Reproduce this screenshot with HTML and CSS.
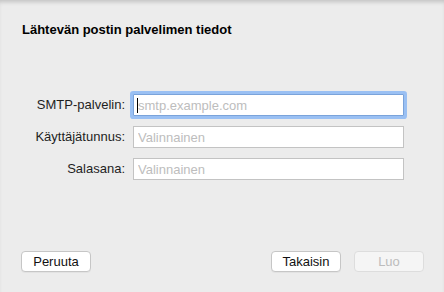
FILE: index.html
```html
<!DOCTYPE html>
<html lang="fi">
<head>
    <meta charset="UTF-8">
    <title>Lähtevän postin palvelimen tiedot</title>
    <link rel="stylesheet" href="styles.css">
</head>
<body>
    <div class="sheet">
        <h1 class="sheet-title">Lähtevän postin palvelimen tiedot</h1>

        <form class="server-form">
            <label for="smtp">SMTP-palvelin:</label>
            <div class="field focused">
                <span class="caret"></span>
                <input type="text" id="smtp" placeholder="smtp.example.com">
            </div>

            <label for="user">Käyttäjätunnus:</label>
            <div class="field">
                <input type="text" id="user" placeholder="Valinnainen">
            </div>

            <label for="pass">Salasana:</label>
            <div class="field">
                <input type="password" id="pass" placeholder="Valinnainen">
            </div>
        </form>

        <footer class="sheet-footer">
            <button type="button" class="btn">Peruuta</button>
            <div class="footer-right">
                <button type="button" class="btn">Takaisin</button>
                <button type="button" class="btn" disabled>Luo</button>
            </div>
        </footer>
    </div>
</body>
</html>
```

FILE: styles.css
```css
:root {
    --sheet-bg: #ececec;
    --text-dark: #1e1e1e;
    --placeholder: #bdbdbd;
    --field-border: #c3c3c3;
    --focus-ring: #9ac0f3;
    --focus-border: #7aa3da;
}

* {
    margin: 0;
    padding: 0;
    box-sizing: border-box;
    font-family: 'Liberation Sans', Arial, sans-serif;
}

html, body {
    width: 444px;
    height: 292px;
    overflow: hidden;
}

.sheet {
    width: 444px;
    height: 292px;
    background-color: var(--sheet-bg);
    box-shadow: inset 0 4px 4px -2px rgba(0,0,0,0.18);
    display: flex;
    flex-direction: column;
}

.sheet-title {
    font-size: 13px;
    font-weight: 700;
    line-height: 15px;
    color: #000;
    padding: 22px 22px 0;
}

.server-form {
    margin-top: 57px;
    padding-left: 20px;
    display: grid;
    grid-template-columns: 105px 271px;
    grid-auto-rows: 22px;
    column-gap: 8px;
    row-gap: 10px;
    align-items: center;
}

.server-form label {
    text-align: right;
    font-size: 13px;
    color: var(--text-dark);
    line-height: 16px;
}

.field {
    position: relative;
    height: 22px;
    background: white;
    border: 1px solid var(--field-border);
}

.field input {
    width: 100%;
    height: 100%;
    border: none;
    outline: none;
    background: transparent;
    padding: 0 4px;
    font-size: 13px;
    color: var(--text-dark);
}

.field input::placeholder {
    color: var(--placeholder);
}

.field.focused {
    border-color: var(--focus-border);
    box-shadow: 0 0 0 3px var(--focus-ring);
    border-radius: 1px;
}

.caret {
    position: absolute;
    left: 3px;
    top: 3px;
    width: 1px;
    height: 15px;
    background: #000;
}

.sheet-footer {
    margin-top: auto;
    padding: 0 20px 20px 21px;
    display: flex;
    justify-content: space-between;
}

.footer-right {
    display: flex;
    gap: 13px;
}

.btn {
    width: 70px;
    height: 21px;
    background: white;
    border: 1px solid #c6c6c6;
    border-radius: 4px;
    font-size: 13px;
    color: #111;
    box-shadow: 0 1px 0 rgba(0,0,0,0.04);
}

.btn:disabled {
    background: #f5f5f5;
    border-color: #dddddd;
    color: #bcbcbc;
    box-shadow: none;
}
```
